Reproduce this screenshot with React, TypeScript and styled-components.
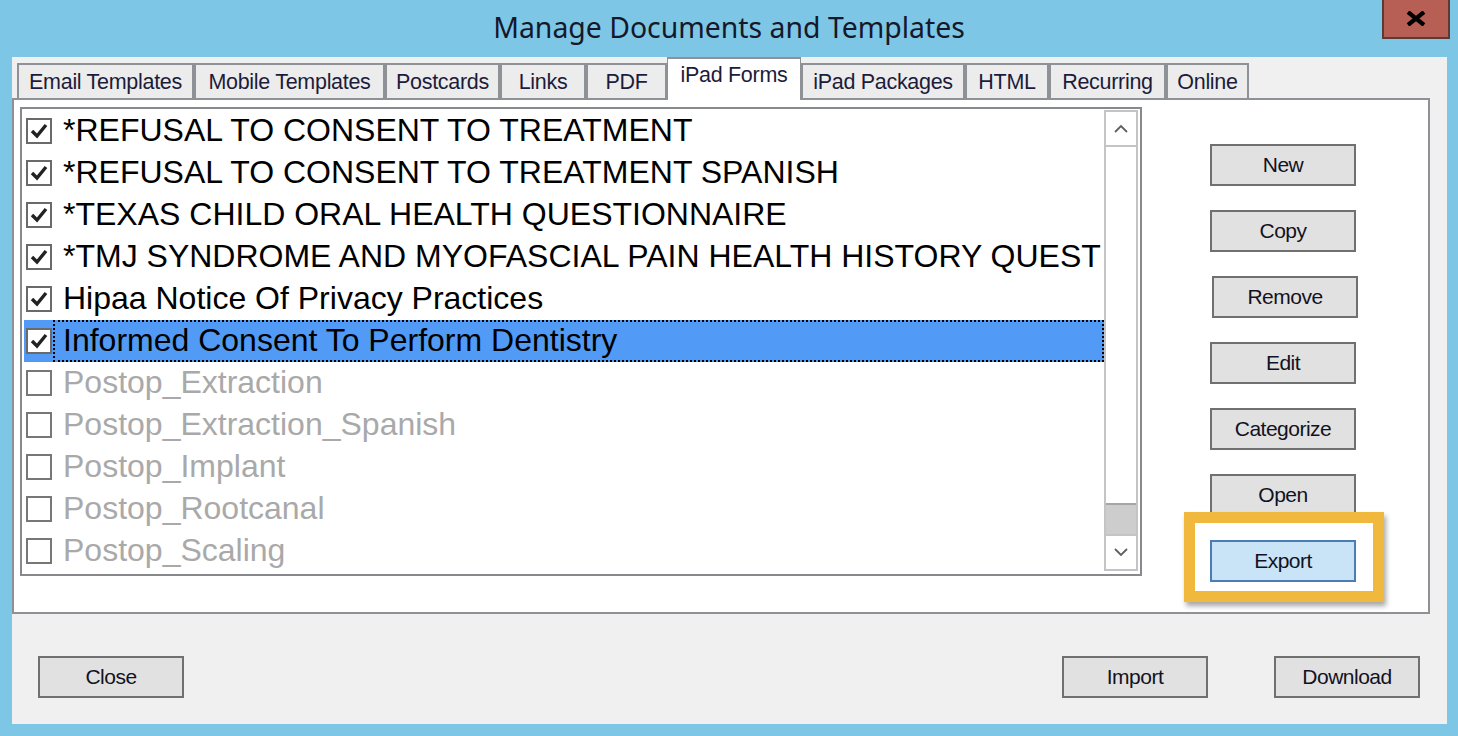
import React from 'react'
import styled, { createGlobalStyle } from 'styled-components'

const GlobalStyle = createGlobalStyle`
  html, body {
    margin: 0;
    padding: 0;
    width: 1458px;
    height: 736px;
    overflow: hidden;
    background: #7ec6e5;
    font-family: 'Liberation Sans', Arial, sans-serif;
  }
`

const Screen = styled.div`
  width: 1458px;
  height: 736px;
  display: flex;
  flex-direction: column;
`

const TitleBar = styled.div`
  height: 57px;
  display: grid;
  grid-template-columns: 1fr auto 1fr;
  align-items: start;
`

const Title = styled.div`
  grid-column: 2;
  padding-top: 8px;
  font-family: 'Noto Sans', 'Open Sans', sans-serif;
  font-size: 28.4px;
  line-height: 38px;
  color: #15182a;
`

const CloseButton = styled.div`
  grid-column: 3;
  justify-self: end;
  margin-right: 8px;
  width: 68px;
  height: 39px;
  box-sizing: border-box;
  background: #b75f55;
  border: 2px solid #5d3a36;
  border-top: none;
  display: flex;
  align-items: center;
  justify-content: center;
`

const Dialog = styled.div`
  margin-left: 12px;
  width: 1435px;
  height: 667px;
  background: #f0f0f0;
  display: flex;
  flex-direction: column;
`

const TabStrip = styled.div`
  height: 41px;
  padding-left: 5px;
  display: flex;
  align-items: flex-end;
  position: relative;
  z-index: 1;
`

const Tab = styled.div<{ $w: number; $active?: boolean }>`
  width: ${p => p.$w}px;
  height: ${p => (p.$active ? 43 : 35)}px;
  margin-bottom: ${p => (p.$active ? -2 : 0)}px;
  box-sizing: border-box;
  border: 2px solid #8e9196;
  border-bottom: none;
  ${p => (p.$active ? 'border-left-width: 1px; border-right-width: 1px;' : '')}
  background: ${p => (p.$active ? '#ffffff' : '#ececec')};
  display: flex;
  justify-content: center;
  padding-top: ${p => (p.$active ? 4 : 5)}px;
  font-size: 21.5px;
  letter-spacing: -0.3px;
  line-height: 24px;
  color: #1c1c3a;
  white-space: nowrap;
`

const TabPage = styled.div`
  width: 1418px;
  height: 516px;
  box-sizing: border-box;
  border: 2px solid #8e9196;
  background: #ffffff;
  display: flex;
  align-items: flex-start;
  padding: 7px 0 0 6px;
`

const ListBox = styled.div`
  width: 1122px;
  height: 469px;
  box-sizing: border-box;
  border: 2px solid #87898d;
  display: flex;
`

const Rows = styled.div`
  flex: 1;
  min-width: 0;
  overflow: hidden;
  padding-top: 1px;
  display: flex;
  flex-direction: column;
`

const Row = styled.div<{ $selected?: boolean }>`
  height: 42px;
  margin-left: 2px;
  display: flex;
  align-items: stretch;
  flex-shrink: 0;
  background: ${p => (p.$selected ? '#519af5' : 'transparent')};
`

const CheckCell = styled.div`
  width: 29px;
  display: flex;
  align-items: center;
  padding-left: 2px;
  box-sizing: border-box;
`

const CheckBox = styled.div<{ $checked?: boolean }>`
  width: 26px;
  height: 26px;
  box-sizing: border-box;
  border: 2px solid ${p => (p.$checked ? '#6a6a6a' : '#777777')};
  background: #ffffff;
  display: flex;
  align-items: center;
  justify-content: center;
`

const Label = styled.div<{ $checked?: boolean; $selected?: boolean }>`
  flex: 1;
  min-width: 0;
  box-sizing: border-box;
  border: 2px ${p => (p.$selected ? 'dotted #000' : 'solid transparent')};
  padding: 0 0 3px 8px;
  display: flex;
  align-items: center;
  font-size: 32px;
  line-height: 36px;
  color: ${p => (p.$checked ? '#000000' : '#a9a9a9')};
  white-space: nowrap;
  overflow: hidden;
`

const ScrollBar = styled.div`
  width: 34px;
  margin: 1px 2px 3px 0;
  box-sizing: border-box;
  border: 2px solid #c4c4c4;
  display: flex;
  flex-direction: column;
`

const ArrowBox = styled.div`
  height: 33px;
  display: flex;
  align-items: center;
  justify-content: center;
`

const Track = styled.div`
  flex: 1;
  border-top: 2px solid #c4c4c4;
  display: flex;
  flex-direction: column;
  justify-content: flex-end;
`

const Thumb = styled.div`
  height: 33px;
  box-sizing: border-box;
  background: #cdcdcd;
  border-top: 2px solid #a6a6a6;
  border-bottom: 2px solid #c4c4c4;
`

const ButtonColumn = styled.div`
  margin-left: 68px;
  padding-top: 37px;
  display: flex;
  flex-direction: column;
  gap: 24px;
`

const Button = styled.button<{ $primary?: boolean; $shift?: number }>`
  width: 146px;
  height: 42px;
  box-sizing: border-box;
  margin: 0 0 0 ${p => p.$shift || 0}px;
  padding: 0;
  border: 2px solid ${p => (p.$primary ? '#4a7db5' : '#707070')};
  background: ${p => (p.$primary ? '#c9e3f7' : '#e1e1e1')};
  font-family: 'Liberation Sans', Arial, sans-serif;
  font-size: 21px;
  letter-spacing: -0.5px;
  color: #121222;
  cursor: default;
`

const Highlight = styled.div`
  position: relative;
  width: 146px;
  height: 42px;

  &::before {
    content: '';
    position: absolute;
    left: -26px;
    top: -28px;
    width: 200px;
    height: 90px;
    box-sizing: border-box;
    border: 11px solid #f0b83c;
    box-shadow: 2px 4px 5px rgba(0, 0, 0, 0.35);
    pointer-events: none;
  }
`

const Footer = styled.div`
  display: flex;
  padding: 42px 27px 0 26px;
`

const Spacer = styled.div`
  flex: 1;
`

const FooterGap = styled.div`
  width: 66px;
`

const CheckMark = () => (
  <svg width="18" height="16" viewBox="0 0 18 16">
    <path d="M2 8 L7 13 L16 2" fill="none" stroke="#222" strokeWidth="3.4" strokeLinejoin="miter" />
  </svg>
)

const Chevron = ({ up }: { up?: boolean }) => (
  <svg width="14" height="9" viewBox="0 0 14 9">
    <path d={up ? 'M1 8 L7 2 L13 8' : 'M1 1 L7 7 L13 1'} fill="none" stroke="#606060" strokeWidth="1.8" />
  </svg>
)

const tabs = [
  { label: 'Email Templates', w: 177 },
  { label: 'Mobile Templates', w: 191 },
  { label: 'Postcards', w: 115 },
  { label: 'Links', w: 86 },
  { label: 'PDF', w: 81 },
  { label: 'iPad Forms', w: 134, active: true },
  { label: 'iPad Packages', w: 164 },
  { label: 'HTML', w: 84 },
  { label: 'Recurring', w: 117 },
  { label: 'Online', w: 83 }
]

const forms = [
  { name: '*REFUSAL TO CONSENT TO TREATMENT', checked: true },
  { name: '*REFUSAL TO CONSENT TO TREATMENT SPANISH', checked: true },
  { name: '*TEXAS CHILD ORAL HEALTH QUESTIONNAIRE', checked: true },
  { name: '*TMJ SYNDROME AND MYOFASCIAL PAIN HEALTH HISTORY QUESTIONNAIRE', checked: true },
  { name: 'Hipaa Notice Of Privacy Practices', checked: true },
  { name: 'Informed Consent To Perform Dentistry', checked: true, selected: true },
  { name: 'Postop_Extraction', checked: false },
  { name: 'Postop_Extraction_Spanish', checked: false },
  { name: 'Postop_Implant', checked: false },
  { name: 'Postop_Rootcanal', checked: false },
  { name: 'Postop_Scaling', checked: false }
]

const App = (): JSX.Element => {
  return (
    <Screen>
      <GlobalStyle />
      <TitleBar>
        <Title>Manage Documents and Templates</Title>
        <CloseButton>
          <svg width="20" height="15" viewBox="0 0 20 15">
            <path d="M2 1 L18 14 M18 1 L2 14" stroke="#000" strokeWidth="4.2" />
          </svg>
        </CloseButton>
      </TitleBar>
      <Dialog>
        <TabStrip>
          {tabs.map(tab => (
            <Tab key={tab.label} $w={tab.w} $active={tab.active}>
              {tab.label}
            </Tab>
          ))}
        </TabStrip>
        <TabPage>
          <ListBox>
            <Rows>
              {forms.map(form => (
                <Row key={form.name} $selected={form.selected}>
                  <CheckCell>
                    <CheckBox $checked={form.checked}>{form.checked && <CheckMark />}</CheckBox>
                  </CheckCell>
                  <Label $checked={form.checked} $selected={form.selected}>
                    {form.name}
                  </Label>
                </Row>
              ))}
            </Rows>
            <ScrollBar>
              <ArrowBox>
                <Chevron up />
              </ArrowBox>
              <Track>
                <Thumb />
              </Track>
              <ArrowBox>
                <Chevron />
              </ArrowBox>
            </ScrollBar>
          </ListBox>
          <ButtonColumn>
            <Button>New</Button>
            <Button>Copy</Button>
            <Button $shift={2}>Remove</Button>
            <Button>Edit</Button>
            <Button>Categorize</Button>
            <Button>Open</Button>
            <Highlight>
              <Button $primary>Export</Button>
            </Highlight>
          </ButtonColumn>
        </TabPage>
        <Footer>
          <Button>Close</Button>
          <Spacer />
          <Button>Import</Button>
          <FooterGap />
          <Button>Download</Button>
        </Footer>
      </Dialog>
    </Screen>
  )
}

export default App
